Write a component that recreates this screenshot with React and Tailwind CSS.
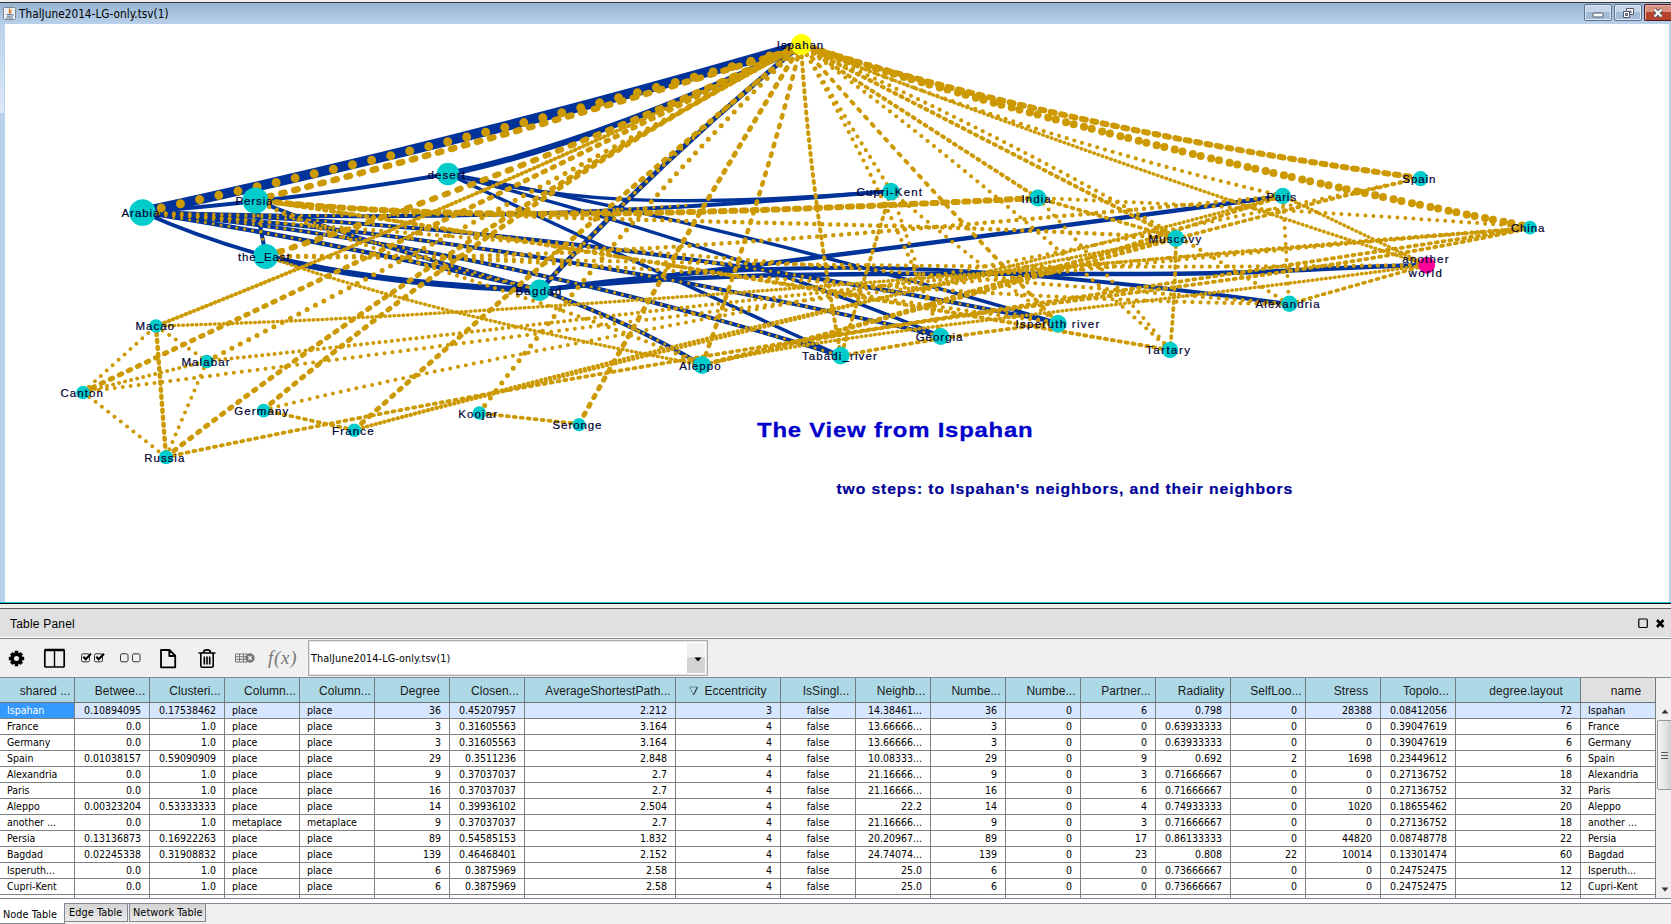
const GOLD = '#cc9900';
const BLUE = '#003399';

// kind: b = solid blue, d = dense gold, s = sparse gold dots, p = paired gold dots
const EDGES = [
  ['b', 10, 'M142 212Q480 139 801 45'],
  ['b', 6, 'M448 174Q590 145 801 47'],
  ['b', 4, 'M142 212Q290 201 448 174'],
  ['b', 4, 'M142 212Q200 238 266 256'],
  ['b', 4.5, 'M142 212Q350 245 540 290'],
  ['b', 4, 'M142 212C400 222 620 215 891 191'],
  ['b', 3.5, 'M448 174C560 200 660 210 891 191'],
  ['b', 3.5, 'M448 174Q720 222 1058 323'],
  ['b', 3.5, 'M448 174Q700 238 941 336'],
  ['b', 3.5, 'M448 174Q620 255 841 356'],
  ['b', 4, 'M142 212Q480 243 841 356'],
  ['b', 4, 'M142 212Q500 235 941 336'],
  ['b', 4, 'M142 212Q580 225 1058 323'],
  ['b', 4, 'M255 200Q360 243 540 290'],
  ['b', 4, 'M255 200L266 256'],
  ['b', 6, 'M266 256Q380 285 540 290'],
  ['b', 4.5, 'M540 290Q800 262 1283 196'],
  ['b', 4.5, 'M540 290C720 270 900 274 1100 274S1300 268 1427 265'],
  ['b', 4, 'M540 290C780 255 980 262 1289 304'],
  ['b', 4, 'M540 290Q630 322 702 365'],
  ['b', 5, 'M540 290Q660 160 801 45'],
  ['big', 9, 'M142 212Q480 140 801 47'],
  ['p', 6.5, 'M255 200Q528 132 801 47'],
  ['p', 6, 'M266 256Q530 172 801 45'],
  ['t', 4, 'M156 326Q500 190 801 45'],
  ['q', 5, 'M83 392Q460 215 801 45'],
  ['s5', 5, 'M207 361Q480 222 801 45'],
  ['q', 5, 'M166 457Q465 225 801 45'],
  ['q', 5, 'M263 410Q525 190 801 45'],
  ['q', 5, 'M354 430Q585 225 801 45'],
  ['s5', 5, 'M479 413Q633 208 801 45'],
  ['q', 5, 'M579 424Q690 225 801 45'],
  ['s', 4, 'M540 290Q660 160 801 45'],
  ['q', 4.5, 'M702 365Q762 200 801 45'],
  ['d', 4, 'M841 356Q810 190 801 45'],
  ['s', 4.2, 'M891 191L801 45'],
  ['s', 4.2, 'M941 336Q890 200 801 45'],
  ['d', 4, 'M1038 198L801 45'],
  ['q', 4, 'M1058 323Q925 185 801 45'],
  ['s', 4.2, 'M1170 350Q975 170 801 45'],
  ['d', 4, 'M1176 238Q990 142 801 45'],
  ['s', 4.2, 'M1289 304Q1060 160 801 45'],
  ['t', 3.5, 'M1427 265Q1110 164 801 45'],
  ['s', 4.2, 'M1283 196Q1040 140 801 45'],
  ['sp', 6, 'M1420 178Q1080 132 801 45'],
  ['ch', 8, 'M1530 227Q1110 145 801 45'],
  ['s', 3.2, 'M142 212Q350 245 540 290'],
  ['s', 3.2, 'M142 212C300 218 520 217 690 205'],
  ['s', 3.2, 'M142 212Q480 243 841 356'],
  ['s', 3.2, 'M142 212Q500 235 941 336'],
  ['s', 3.2, 'M142 212Q580 225 1058 323'],
  ['s', 3.2, 'M255 200Q360 243 540 290'],
  ['s', 3.2, 'M255 200L266 256'],
  ['s', 3.2, 'M540 290Q630 322 702 365'],
  ['sp', 6, 'M255 200C450 222 700 215 1038 198'],
  ['s', 4.5, 'M255 200C500 225 850 218 1176 238'],
  ['s', 4.5, 'M266 256C500 262 700 250 1283 196'],
  ['s', 4, 'M1038 198Q1280 208 1530 227'],
  ['d', 3.8, 'M1038 198L1176 238'],
  ['s', 4, 'M1038 198Q1100 265 1170 350'],
  ['s', 4, 'M891 191Q960 250 1058 323'],
  ['s', 4, 'M891 191Q915 260 941 336'],
  ['d', 3.8, 'M891 191Q870 260 841 356'],
  ['s', 4.2, 'M266 256C500 256 850 272 1427 265'],
  ['s', 4.2, 'M255 200C500 235 800 290 1058 323'],
  ['s', 4.2, 'M142 212C500 240 900 272 1289 304'],
  ['s', 4.2, 'M266 256C600 252 900 300 1289 304'],
  ['t', 3.5, 'M266 256Q420 312 702 365'],
  ['s', 4.2, 'M255 200C350 250 560 300 702 365'],
  ['d', 4, 'M255 200C500 235 850 295 1170 350'],
  ['t', 3.5, 'M156 326C500 316 900 280 1530 228'],
  ['s6', 4, 'M207 361C550 326 900 275 1530 228'],
  ['s', 4, 'M83 392C500 340 900 280 1530 228'],
  ['s', 4, 'M263 410C550 340 900 290 1420 178'],
  ['d', 3.8, 'M166 457C600 365 1000 310 1530 228'],
  ['t', 3.5, 'M354 430C600 362 900 288 1176 238'],
  ['t', 3.5, 'M354 430C600 364 950 285 1283 196'],
  ['d', 3.8, 'M702 365C900 320 1000 275 1176 238'],
  ['d', 3.8, 'M702 365C900 320 1100 255 1283 196'],
  ['d', 3.8, 'M702 365C950 305 1150 240 1420 178'],
  ['t', 3.5, 'M702 365C850 330 1100 310 1427 265'],
  ['d', 3.8, 'M702 365C900 310 1250 290 1530 228'],
  ['d', 3.8, 'M841 356Q950 335 1058 323'],
  ['d', 3.8, 'M1176 238Q1175 300 1170 350'],
  ['s', 4, 'M1283 196Q1286 250 1289 304'],
  ['t', 3.5, 'M1283 196L1427 265'],
  ['d', 3.6, 'M1289 304L1427 265'],
  ['s', 4, 'M83 392L156 326'],
  ['s', 4, 'M156 326L207 361'],
  ['d', 4.5, 'M156 326L166 457'],
  ['s6', 4, 'M83 392L207 361'],
  ['s', 4, 'M207 361L166 457'],
  ['s', 4, 'M83 392L166 457'],
  ['d', 3.8, 'M263 410L354 430'],
  ['d', 3.8, 'M479 413L579 424'],
];

const DASH = {
  b: undefined,
  big: '0 19.6',
  p: '3.5 10',
  q: '2.5 7.5',
  sp: '4 6.6',
  ch: '0 8 0 10.7',
  d: '2 5',
  t: '0.6 3.9',
  s: '0 8',
  s5: '0 9.4',
  s6: '0 6.2',
};

// label, cx, cy, r, label left, label width, baseline
const NODES = [
  ['Ispahan', 801.4, 44.5, 10.5, 776.8, 46.4, 48.5],
  ['Arabia', 142.5, 212.5, 13.3, 121.5, 38, 216.5],
  ['Persia', 255.4, 200.5, 13, 235.5, 37, 204.5],
  ['desert', 448, 174, 11.3, 427.5, 37.5, 178.7],
  ['the_East', 265.7, 256.5, 12.5, 238, 51.6, 260.6],
  ['Bagdad', 539.6, 290.3, 10.7, 515.4, 46, 294.7],
  ['Macao', 156, 326, 6.8, 135.4, 38.6, 330],
  ['Malabar', 206.8, 361.5, 6.8, 181.4, 48.2, 365.7],
  ['Canton', 83, 392.5, 6.8, 60.4, 42.4, 396.7],
  ['Germany', 263.6, 410.6, 6.8, 234.3, 53.9, 414.7],
  ['France', 354.3, 430.3, 6.8, 332, 41.6, 434.7],
  ['Russia', 166, 457.3, 7, 144.3, 40, 461.7],
  ['Koojar', 479.3, 413, 6.8, 458.2, 38.8, 417.5],
  ['Seronge', 579, 424.6, 6.6, 552.5, 49, 428.7],
  ['Aleppo', 702, 365, 9, 679.3, 41.4, 369.7],
  ['Tabadi_river', 840.7, 355.6, 8.8, 802, 74.8, 359.7],
  ['Georgia', 940.7, 336.6, 8.5, 915.7, 46.8, 340.7],
  ['Isperuth river', 1058, 323.6, 8.8, 1015.4, 84, 327.7],
  ['Cupri-Kent', 891, 191.6, 8.8, 856.4, 65.6, 195.7],
  ['India', 1037.9, 198, 8.5, 1021.4, 29.3, 202.7],
  ['Muscovy', 1176, 238.6, 8.5, 1148.4, 52.8, 242.7],
  ['Paris', 1282.8, 196, 8.2, 1266.4, 29.6, 200.5],
  ['Spain', 1420.5, 178.6, 7.5, 1402.3, 33.1, 182.7],
  ['China', 1530, 227.6, 6.8, 1511, 33.3, 231.5],
  ['another', 1426.7, 265.3, 8.4, 1402.3, 46.2, 262.7],
  ['Alexandria', 1289.4, 303.7, 8.2, 1255.5, 64.1, 307.7],
  ['Tartary', 1170, 350, 8.2, 1146, 44, 353.7],
];

const nodeColor = { Ispahan: '#ffff00', another: '#ff0099' };

function Network() {
  return (
    <svg width="1664" height="578" viewBox="5 24 1664 578" className="block bg-white" fontFamily="'Liberation Sans', Arial, sans-serif">
      <g fill="none">
        {EDGES.map(([kind, w, d], i) => (
          <path key={i} d={d} stroke={kind === 'b' ? BLUE : GOLD} strokeWidth={w} strokeLinecap={kind === 'b' ? 'butt' : 'round'} strokeDasharray={DASH[kind]} />
        ))}
      </g>
      {NODES.map(([name, cx, cy, r]) => (
        <circle key={name} cx={cx} cy={cy} r={r} fill={nodeColor[name] || '#00cccc'} />
      ))}
      <g fontSize="11.5" fill="#000033" stroke="#000033" strokeWidth="0.2">
        {NODES.map(([name, , , , x, w, y]) => (
          <text key={name} x={x} y={y} textLength={w}>{name}</text>
        ))}
        <text x="1408.5" y="276.700" textLength="33.5">world</text>
      </g>
      <text x="757" y="437" textLength="276.5" lengthAdjust="spacingAndGlyphs" letterSpacing="0.7" fontSize="21" fontWeight="bold" fill="#0000cc" stroke="#0000cc" strokeWidth="0.3">The View from Ispahan</text>
      <text x="836.5" y="494" textLength="456.500" lengthAdjust="spacingAndGlyphs" letterSpacing="0.8" fontSize="14" fontWeight="bold" fill="#000099" stroke="#000099" strokeWidth="0.200">two steps: to Ispahan's neighbors, and their neighbors</text>
    </svg>
  );
}

const TAHOMA = "font-['DejaVu_Sans_Condensed','DejaVu_Sans',sans-serif] [font-stretch:condensed]";

function TitleBar() {
  return (
    <div className="flex h-[21px] shrink-0 items-start bg-gradient-to-b from-[#98b4d2] to-[#b9d1ea] pl-[3px]">
      <svg width="13" height="13" viewBox="0 0 13 13" className="mt-[4px] shrink-0">
        <rect x="0.5" y="0.5" width="12" height="12" rx="1" fill="#eef1f4" stroke="#7b8793" />
        <path d="M7 1.5C5 3.5 8 4 6 6.5M8.5 3C7.5 4 8 5 7.3 6.3" stroke="#e2771d" strokeWidth="1.2" fill="none" />
        <path d="M3.5 7.5h5.5M4 9.2h4.5M3 11h7M9.5 7.5c1.5 0 1 1.5-.5 1.6" stroke="#46698c" strokeWidth="0.9" fill="none" />
      </svg>
      <div className={`ml-[3px] mt-[4px] text-[11.7px] leading-[15px] tracking-[0.04px] text-black ${TAHOMA}`}>ThalJune2014-LG-only.tsv(1)</div>
      <div className="ml-auto mt-px flex gap-px">
        <div className="flex h-[17px] w-[28px] items-center justify-center rounded-[2px] border border-[#5d7490] bg-gradient-to-b from-[#c5d6ea] from-50% to-[#a3bcd8] to-50% shadow-[inset_0_0_0_1px_#dce7f3]">
          <svg width="12" height="6" viewBox="0 0 12 6" className="mt-[4px]"><rect x="1" y="1" width="10" height="4" rx="0.5" fill="#fff" stroke="#535666" /></svg>
        </div>
        <div className="ml-[1px] flex h-[17px] w-[28px] items-center justify-center rounded-[2px] border border-[#5d7490] bg-gradient-to-b from-[#c5d6ea] from-50% to-[#a3bcd8] to-50% shadow-[inset_0_0_0_1px_#dce7f3]">
          <svg width="12" height="12" viewBox="0 0 12 12" fill="#fff" stroke="#535666"><path d="M4.5 1.5h7v6h-7z" /><path d="M7 4h2v1.500h-2z" fill="#9fb6d0" /><path d="M1.5 4.5h6v6h-6z" /><path d="M3.5 6.5h2v2h-2z" fill="#9fb6d0" /></svg>
        </div>
        <div className="ml-[1px] flex h-[17px] w-[27px] items-center justify-center rounded-l-[2px] border border-r-0 border-[#4f1a20] bg-gradient-to-b from-[#d8917f] from-50% to-[#b8432c] to-50% shadow-[inset_1px_1px_0_0_#e8b3a6]">
          <svg width="12" height="10" viewBox="0 0 12 10"><path d="M2.5 1.5l7 7M9.5 1.5l-7 7" stroke="#535666" strokeWidth="4" /><path d="M2.5 1.5l7 7M9.5 1.5l-7 7" stroke="#fff" strokeWidth="2.2" /></svg>
        </div>
      </div>
    </div>
  );
}

function Toolbar() {
  return (
    <div className="flex h-[38px] shrink-0 items-start bg-[#f0f0f0] pl-[8px]">
      <svg width="300" height="38" viewBox="8 639 300 38" className="shrink-0" fill="none" stroke="#000">
        <g strokeWidth="3.6">
          <path d="M16.5 650.8v15.400M8.8 658.5h15.4M11.200 653.200l10.600 10.600M21.800 653.200l-10.600 10.600" />
        </g>
        <circle cx="16.5" cy="658.5" r="4.3" fill="#f0f0f0" strokeWidth="3.6" />
        <rect x="44.800" y="650" width="19.400" height="17" rx="1" strokeWidth="1.700" /><path d="M54.500 650v17" strokeWidth="1.400" /><path d="M44.5 650h20" strokeWidth="2.5" />
        <g strokeWidth="1" stroke="#333">
          <rect x="81.500" y="653.800" width="8" height="8" rx="1.500" /><rect x="94.500" y="653.800" width="8" height="8" rx="1.500" />
          <rect x="120.500" y="653.800" width="7.500" height="8" rx="1.500" /><rect x="132.500" y="653.800" width="7.500" height="8" rx="1.500" />
        </g>
        <path d="M83.300 656.800l2.400 2.500 5.300-5.600M96.300 656.800l2.400 2.500 5.300-5.600" strokeWidth="2" />
        <path d="M161 650h8.500l5.700 5.700v11.600h-14.200zM169.300 650v6h6" strokeWidth="1.800" strokeLinejoin="round" />
        <path d="M198.500 653h17M203.500 652.500c0-3.500 7-3.500 7 0M200.800 653.500v12.300q0 1.500 1.500 1.500h9.400q1.500 0 1.500-1.500v-12.300M204.300 656.500v8M207 656.500v8M209.700 656.500v8" strokeWidth="1.600" />
        <g stroke="#777"><path d="M235.500 654h12v8h-12zM235.500 656.700h12M235.500 659.300h12M239.500 654v8M243.500 654v8" /><circle cx="250" cy="658" r="4.700" fill="#777" stroke="none" /><path d="M248.300 656.300l3.400 3.400M251.700 656.300l-3.400 3.400" stroke="#f0f0f0" strokeWidth="1.400" /></g>
        <text x="268" y="664" textLength="28.500" fontSize="19" fill="#777" stroke="none" fontStyle="italic" fontFamily="'Liberation Serif', serif">f(x)</text>
      </svg>
      <div className="mt-[1px] flex h-[36px] w-[400px] items-stretch border border-[#ababab] bg-white p-[2px] shadow-[inset_0_0_0_1px_#e3e3e3]">
        <div className={`flex-1 pt-[9px] text-[10.8px] leading-[14px] tracking-[0.08px] text-black ${TAHOMA}`}>ThalJune2014-LG-only.tsv(1)</div>
        <div className="flex w-[18px] items-center justify-center bg-gradient-to-b from-[#f0f0f0] from-45% to-[#d2d2d2] to-50%">
          <svg width="8" height="5" viewBox="0 0 8 5" className="ml-[3px] mt-[2px]"><path d="M0.500 0.500h7L4 4.500z" fill="#000" /></svg>
        </div>
      </div>
    </div>
  );
}

const COLS = [
  ['shared ...', 'l', 'w-[75px]'],
  ['Betwee...', 'r', 'w-[75px]'],
  ['Clusteri...', 'r', 'w-[75px]'],
  ['Column...', 'l', 'w-[75px]'],
  ['Column...', 'l', 'w-[75px]'],
  ['Degree', 'r', 'w-[75px]'],
  ['Closen...', 'r', 'w-[75px]'],
  ['AverageShortestPath...', 'r', 'w-[151px]'],
  ['Eccentricity', 'r', 'w-[105px]'],
  ['IsSingl...', 'c', 'w-[75px]'],
  ['Neighb...', 'r', 'w-[75px]'],
  ['Numbe...', 'r', 'w-[75px]'],
  ['Numbe...', 'r', 'w-[75px]'],
  ['Partner...', 'r', 'w-[75px]'],
  ['Radiality', 'r', 'w-[75px]'],
  ['SelfLoo...', 'r', 'w-[75px]'],
  ['Stress', 'r', 'w-[75px]'],
  ['Topolo...', 'r', 'w-[75px]'],
  ['degree.layout', 'r', 'w-[125px]'],
  ['name', 'l', 'w-[75px]'],
];

const ROWS = [
  'Ispahan|0.10894095|0.17538462|place|place|36|0.45207957|2.212|3|false|14.38461...|36|0|6|0.798|0|28388|0.08412056|72|Ispahan',
  'France|0.0|1.0|place|place|3|0.31605563|3.164|4|false|13.66666...|3|0|0|0.63933333|0|0|0.39047619|6|France',
  'Germany|0.0|1.0|place|place|3|0.31605563|3.164|4|false|13.66666...|3|0|0|0.63933333|0|0|0.39047619|6|Germany',
  'Spain|0.01038157|0.59090909|place|place|29|0.3511236|2.848|4|false|10.08333...|29|0|9|0.692|2|1698|0.23449612|6|Spain',
  'Alexandria|0.0|1.0|place|place|9|0.37037037|2.7|4|false|21.16666...|9|0|3|0.71666667|0|0|0.27136752|18|Alexandria',
  'Paris|0.0|1.0|place|place|16|0.37037037|2.7|4|false|21.16666...|16|0|6|0.71666667|0|0|0.27136752|32|Paris',
  'Aleppo|0.00323204|0.53333333|place|place|14|0.39936102|2.504|4|false|22.2|14|0|4|0.74933333|0|1020|0.18655462|20|Aleppo',
  'another ...|0.0|1.0|metaplace|metaplace|9|0.37037037|2.7|4|false|21.16666...|9|0|3|0.71666667|0|0|0.27136752|18|another ...',
  'Persia|0.13136873|0.16922263|place|place|89|0.54585153|1.832|4|false|20.20967...|89|0|17|0.86133333|0|44820|0.08748778|22|Persia',
  'Bagdad|0.02245338|0.31908832|place|place|139|0.46468401|2.152|4|false|24.74074...|139|0|23|0.808|22|10014|0.13301474|60|Bagdad',
  'Isperuth...|0.0|1.0|place|place|6|0.3875969|2.58|4|false|25.0|6|0|0|0.73666667|0|0|0.24752475|12|Isperuth...',
  'Cupri-Kent|0.0|1.0|place|place|6|0.3875969|2.58|4|false|25.0|6|0|0|0.73666667|0|0|0.24752475|12|Cupri-Kent',
].map((r) => r.split('|'));

const ALIGN = { l: 'text-left pl-[7px]', r: 'text-right pr-[8px]', c: 'text-center' };

function DataTable() {
  return (
    <div className="flex h-[221px] shrink-0 border-b border-[#828790] bg-white">
      <div className="flex h-[220px] w-[1656px] flex-col overflow-hidden">
        <div className="flex h-[25px] shrink-0 border-b border-[#707478] font-['Liberation_Sans',Arial,sans-serif] text-[12px] leading-[22px] tracking-[0.07px] text-[#1a1a1a]">
          {COLS.map(([label, , w], i) => (
            <div key={i} className={`flex shrink-0 items-center justify-center whitespace-nowrap border-r border-[#707880] pt-[2px] ${w} ${i === 19 ? 'bg-[#e0e0e0]' : 'bg-[#add8e6]'} ${i === 8 ? 'gap-[6px]' : 'pl-[16px]'}`}>
              {i === 8 && (
                <svg width="9" height="10" viewBox="0 0 9 10"><path d="M0.500 1h8L4.500 9z" fill="none" stroke="#6f8d98" /><path d="M8.500 1L4.500 9" stroke="#222" /></svg>
              )}
              {label}
            </div>
          ))}
        </div>
        {ROWS.map((row, r) => (
          <div key={r} className={`flex h-[16px] shrink-0 border-b border-[#808080] text-[10.5px] leading-[15px] text-black ${TAHOMA} ${r === 0 ? 'bg-[#d6e6ff]' : 'bg-white'}`}>
            {row.map((v, c) => (
              <div key={c} className={`shrink-0 whitespace-nowrap border-r border-[#808080] ${COLS[c][2]} ${ALIGN[COLS[c][1]]} ${r === 0 && c === 0 ? 'bg-[#3399ff] text-white' : ''}`}>{v}</div>
            ))}
          </div>
        ))}
        <div className="flex h-[3px] shrink-0">
          {COLS.map(([, , w], i) => <div key={i} className={`shrink-0 border-r border-[#808080] ${w}`} />)}
        </div>
      </div>
      <div className="flex flex-1 flex-col bg-[#f0f0f0] pl-[1px]">
        <div className="h-[24px] shrink-0" />
        <svg width="14" height="195" viewBox="0 0 14 195" className="block">
          <defs><linearGradient id="thumb"><stop offset="0" stopColor="#f5f5f5" /><stop offset="0.5" stopColor="#e2e2e4" /><stop offset="1" stopColor="#c4c5c9" /></linearGradient></defs>
          <path d="M4.500 11.500l3.500-4 3.500 4z" fill="#333" />
          <rect x="0.500" y="18.500" width="16" height="69" rx="1.500" fill="url(#thumb)" stroke="#979797" />
          <path d="M4 50.500h7M4 53.500h7M4 56.500h7" stroke="#555" />
          <path d="M4.500 185.500l3.500 4 3.500-4z" fill="#333" />
        </svg>
      </div>
    </div>
  );
}

export default function App() {
  return (
    <div className="flex h-[924px] w-[1671px] flex-col overflow-hidden bg-[#f0f0f0]">
      <div className="h-[3px] shrink-0 border-b border-[#3a3a3a] bg-[#f0f0f0]" />
      <TitleBar />
      <div className="flex h-[578px] shrink-0 bg-[#b9d1ea]">
        <div className="w-[5px] shrink-0 pr-px">
          <div className="h-[89px] bg-gradient-to-b from-[#b9d1ea] to-[#dde9f7]" />
        </div>
        <Network />
      </div>
      <div className="h-[2px] shrink-0 border-b border-black bg-[#22c4e4]" />
      <div className="h-[4px] shrink-0" />
      <div className="flex h-[30px] shrink-0 items-center border-b border-t border-b-white border-t-[#5f5f5f] bg-[#e0e0e0] pl-[10px] pr-[6px] pt-px">
        <div className="font-['Liberation_Sans',Arial,sans-serif] text-[12px] tracking-[0.2px] text-black">Table Panel</div>
        <svg width="27" height="11" viewBox="0 0 27 11" className="ml-auto"><rect x="0.800" y="1" width="8.500" height="8.500" rx="1" fill="none" stroke="#000" strokeWidth="1.200" /><path d="M19 2l6.500 7M25.500 2l-6.500 7" stroke="#000" strokeWidth="2.600" /></svg>
      </div>
      <div className="h-px shrink-0 bg-[#828790]" />
      <Toolbar />
      <div className="h-px shrink-0 bg-[#828790]" />
      <DataTable />
      <div className="h-[4px] shrink-0 bg-white" />
      <div className={`flex h-[21px] shrink-0 items-start border-t border-[#828790] text-[10.800px] tracking-[0.080px] text-black ${TAHOMA}`}>
        <div className="-mt-px h-[21px] w-[65px] border-b border-r border-[#828790] bg-white pl-[3px] pt-[3px] leading-[18px]">Node Table</div>
        <div className="h-[18px] w-[63px] border-b border-r border-[#828790] bg-gradient-to-b from-[#d4d4d4] to-[#ececec] pl-[4px] leading-[17px]">Edge Table</div>
        <div className="ml-px h-[18px] w-[77px] border-b border-l border-r border-[#828790] bg-gradient-to-b from-[#d4d4d4] to-[#ececec] pl-[3px] leading-[17px]">Network Table</div>
      </div>
    </div>
  );
}
